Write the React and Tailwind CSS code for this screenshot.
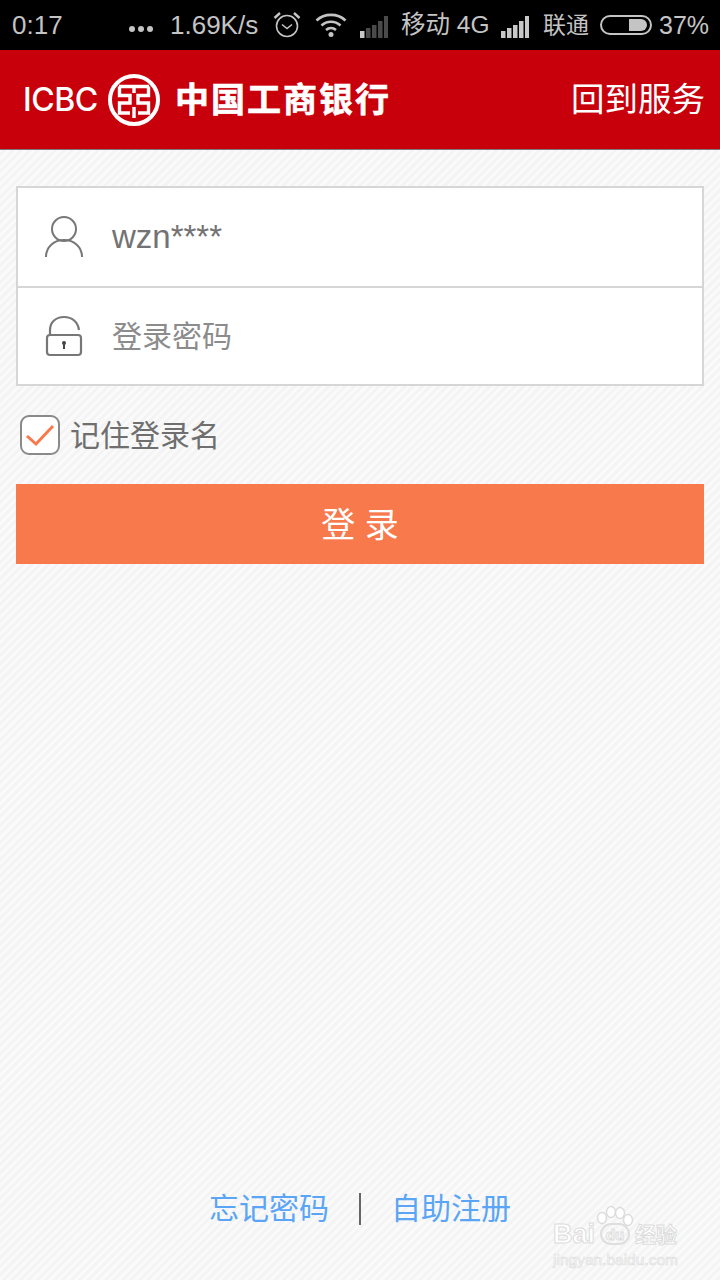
const FONT = "font-['Liberation_Sans','Noto_Sans_CJK_SC',sans-serif]";

const BAR_HEIGHTS = [7, 10, 13, 17, 22];

const SignalBars = ({ className, levels }) => (
  <svg width="28" height="22" viewBox="0 0 28 22" className={className}>
    {BAR_HEIGHTS.map((h, i) => (
      <rect key={i} x={i * 6} y={22 - h} width="4.500" height={h} fill={i < levels ? '#c8c8c8' : '#4a4a4a'} />
    ))}
  </svg>
);

const StatusBar = () => (
  <div className="flex h-[50px] items-center whitespace-nowrap bg-black text-[#c4c4c4]">
    <span className="ml-3 w-[51px] text-[26px] leading-none">0:17</span>
    <span className="ml-[66px] mt-2 flex gap-[3px]">
      <i className="h-[6px] w-[6px] rounded-full bg-[#c4c4c4]" />
      <i className="h-[6px] w-[6px] rounded-full bg-[#c4c4c4]" />
      <i className="h-[6px] w-[6px] rounded-full bg-[#c4c4c4]" />
    </span>
    <span className="ml-[17px] w-[90px] text-[26px] leading-none">1.69K/s</span>
    {/* alarm */}
    <svg width="28" height="28" viewBox="0 0 28 28" fill="none" stroke="#c4c4c4" strokeWidth="1.600" className="ml-[13px]">
      <circle cx="14" cy="15" r="10.500" />
      <path d="M9 13.500l5 4 5-4" />
      <path d="M1.500 7 7 2M26.500 7 21 2" strokeWidth="2.400" />
    </svg>
    {/* wifi */}
    <svg width="32" height="24" viewBox="0 0 32 24" fill="none" stroke="#c4c4c4" strokeWidth="2.600" className="ml-[14px]">
      <path d="M1.500 7.500C9.500 0 22.500 0 30.500 7.500" />
      <path d="M6.500 12.500c5.500-5 13.500-5 19 0" />
      <path d="M11 17c3-2.600 7-2.600 10 0" />
      <circle cx="16" cy="21.500" r="2.500" fill="#c4c4c4" stroke="none" />
    </svg>
    <SignalBars className="ml-[13px] mt-1" levels={1} />
    <span className="ml-[13px] w-[87px] text-[24.500px] leading-none">移动 4G</span>
    <SignalBars className="ml-[13px] mt-1" levels={5} />
    <span className="ml-[14px] w-[46px] text-[23px] leading-none">联通</span>
    {/* battery */}
    <div className="ml-[11px] flex h-[20px] w-[52px] items-center justify-end rounded-full border-2 border-[#c4c4c4] pr-[3px]">
      <span className="h-[12px] w-[18px] rounded-r-full bg-[#c4c4c4]" />
    </div>
    <span className="ml-[7px] text-[25px] leading-none">37%</span>
  </div>
);

const Emblem = () => (
  <svg width="52" height="52" viewBox="0 0 52 52" fill="none" stroke="#fff" strokeWidth="3.400" className="ml-[8px] shrink-0">
    <circle cx="26" cy="26" r="24" strokeWidth="4" />
    <path d="M11 12.500H41M26 12.500V19M26 33V44" />
    <path d="M11.500 12.500V21.500H22V29H11.500V39H22M40.500 12.500V21.500H30V29H40.500V39H30" />
  </svg>
);

const Header = () => (
  <div className="flex h-[100px] items-center border-b border-[#7a7a7a] bg-[#c7000b] text-white">
    <span className="ml-[23px] w-[77px] font-['Inter',sans-serif] text-[32px] font-medium leading-none tracking-[-0.5px]">ICBC</span>
    <Emblem />
    <span className="ml-[15px] text-[34px] font-bold leading-none tracking-[2px] [-webkit-text-stroke:0.6px_#fff]">中国工商银行</span>
    <span className="ml-auto mr-[15px] text-[33.500px] leading-none">回到服务</span>
  </div>
);

const UserIcon = () => (
  <svg width="38" height="42" viewBox="0 0 38 42" fill="none" stroke="#777" strokeWidth="2">
    <circle cx="19" cy="13" r="12" />
    <path d="M1 41c0-10 8-17 18-17s18 7 18 17" />
  </svg>
);

const LockIcon = () => (
  <svg width="38" height="42" viewBox="0 0 38 42" fill="none" stroke="#777" strokeWidth="2.200">
    <path d="M5 20V15C5 7 11 2 19 2s14 5 15 13" />
    <rect x="2" y="20" width="34" height="20" rx="3" />
    <circle cx="19" cy="28" r="2" fill="#444" stroke="none" />
    <path d="M19 28v6" stroke="#444" strokeWidth="2" />
  </svg>
);

const Field = ({ icon, children, className }) => (
  <div className={`flex items-center bg-white pl-[27px] ${className}`}>
    {icon}
    <div className="ml-[29px]">{children}</div>
  </div>
);

export default function App() {
  return (
    <div className={`relative flex h-[1280px] w-[720px] flex-col overflow-hidden bg-[repeating-linear-gradient(135deg,#f4f4f4_0px,#f4f4f4_3px,#fafafa_3px,#fafafa_6px)] ${FONT}`}>
      <StatusBar />
      <Header />

      <div className="flex flex-col px-4 pt-9">
        {/* login form */}
        <div className="border-2 border-[#d6d6d6]">
          <Field icon={<UserIcon />} className="h-[100px] border-b-2 border-[#d6d6d6]">
            <span className="text-[33px] text-[#737373]">wzn****</span>
          </Field>
          <Field icon={<LockIcon />} className="h-[96px]">
            <span className="text-[30px] text-[#8c8c8c]">登录密码</span>
          </Field>
        </div>

        {/* remember me */}
        <label className="ml-1 mt-[29px] flex items-center">
          <span className="flex h-[40px] w-[40px] items-center justify-center rounded-[9px] border-2 border-[#8a8a8a] bg-white">
            <svg width="30" height="24" viewBox="0 0 30 24" fill="none" stroke="#f9784c" strokeWidth="3">
              <path d="M2 13l9 8L28 3" />
            </svg>
          </span>
          <span className="ml-[10px] mt-[2px] text-[30px] leading-none text-[#6f6f6f]">记住登录名</span>
        </label>

        <button className="mt-[29px] h-[80px] bg-[#f8794c] pt-[2px] text-[34px] text-white">登 录</button>
      </div>

      {/* footer links */}
      <div className="mt-auto mb-[55px] flex items-center pl-[209px]">
        <span className="text-[30px] leading-none text-[#5aa5f5]">忘记密码</span>
        <span className="ml-[30px] h-8 w-[2px] bg-[#666]" />
        <span className="ml-[30px] text-[30px] leading-none text-[#5aa5f5]">自助注册</span>
      </div>

      {/* baidu watermark */}
      <div className="absolute left-[553px] top-[1206px] flex w-[130px] flex-col pt-[16px] text-white">
        <div className="flex h-[24px] items-center [-webkit-text-stroke:1px_#dcdcdc]">
          <span className="w-[43px] text-[27px] font-bold leading-none">Bai</span>
          <span className="ml-[4px] flex h-[22px] w-[30px] items-center justify-center rounded-full border-2 border-[#dedede] text-[15px] font-bold leading-none">du</span>
          <span className="ml-[5px] text-[21px] font-bold leading-none">经验</span>
        </div>
        <span className="mt-[6px] text-[15.500px] leading-none text-[#f7f7f7] [-webkit-text-stroke:0.6px_#dedede]">jingyan.baidu.com</span>
        <svg width="46" height="24" viewBox="0 0 46 24" className="absolute left-[40px] top-0" fill="#fff" stroke="#dcdcdc" strokeWidth="1.500">
          <ellipse cx="9" cy="12" rx="4.500" ry="5.500" />
          <ellipse cx="18" cy="6" rx="4.500" ry="5.500" />
          <ellipse cx="27" cy="7" rx="4.500" ry="5.500" />
          <ellipse cx="35" cy="14" rx="4.500" ry="5.500" />
        </svg>
      </div>
    </div>
  );
}
